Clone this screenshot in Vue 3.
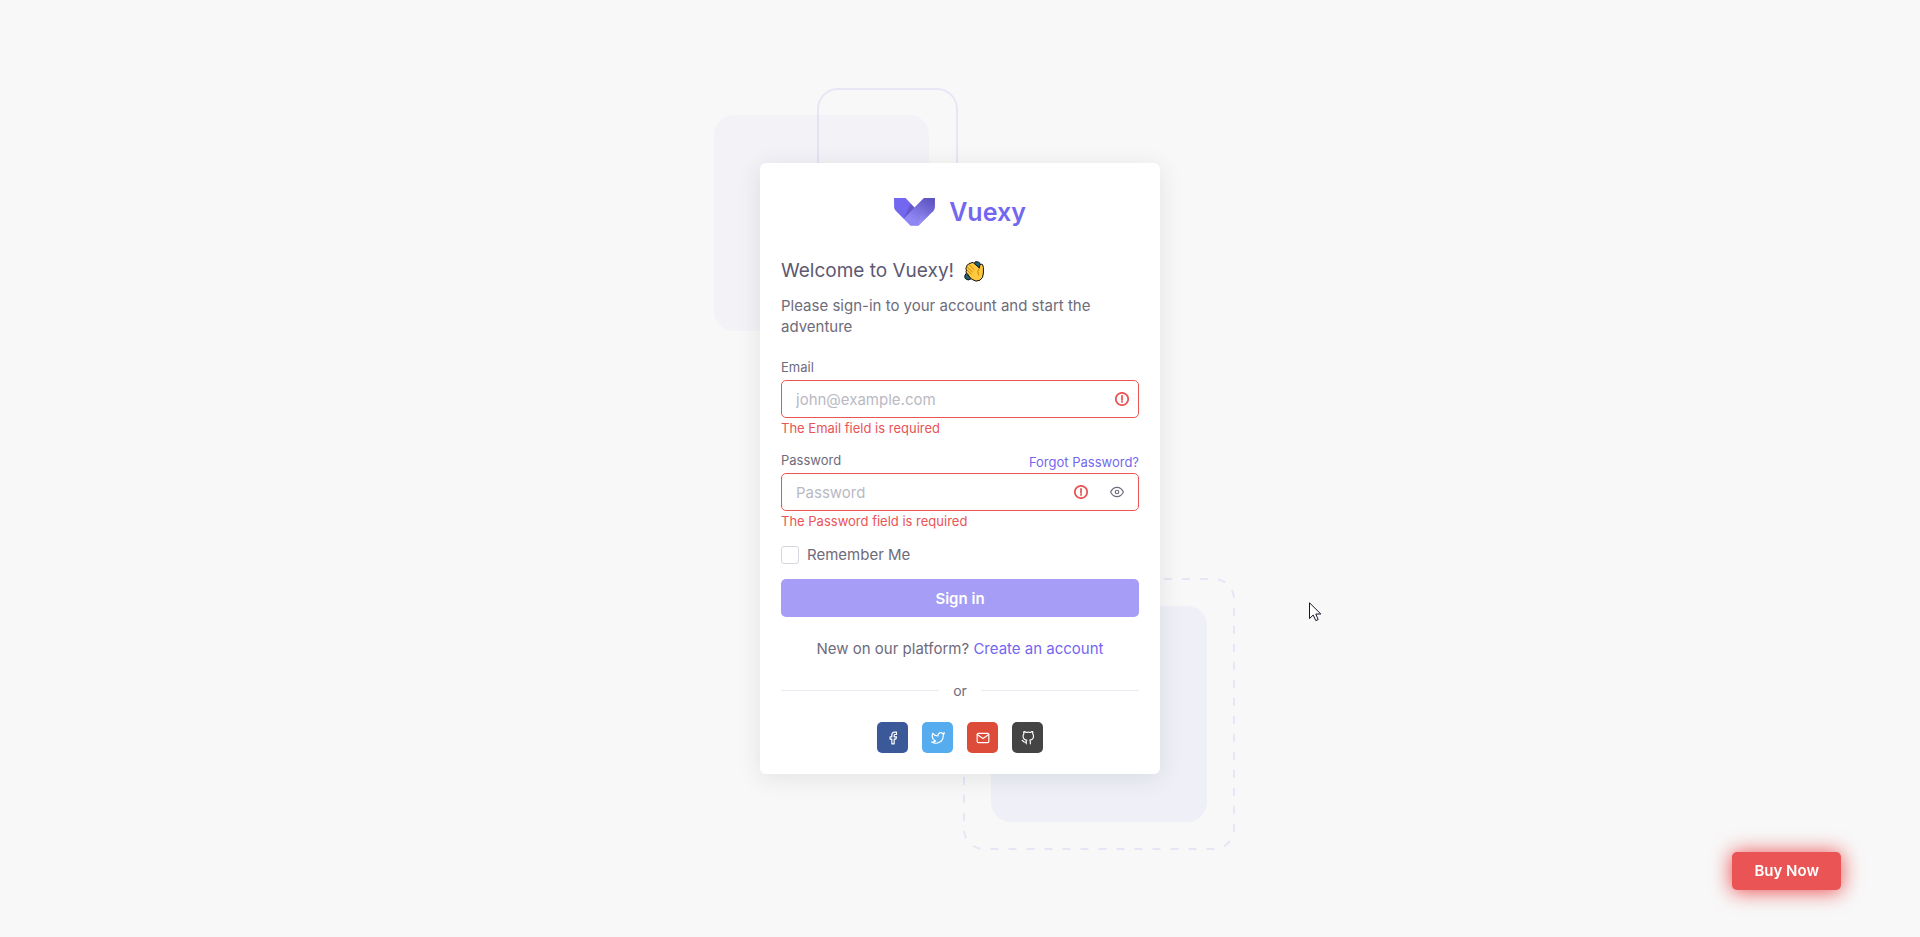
<script setup>
import { ref } from 'vue'

const email = ref('')
const password = ref('')
const remember = ref(false)
const visible = ref(false)

const socials = [
  {
    name: 'Facebook',
    tone: 'facebook',
    paths: ['M18 2h-3a5 5 0 0 0-5 5v3H7v4h3v8h4v-8h3l1-4h-4V7a1 1 0 0 1 1-1h3z'],
  },
  {
    name: 'Twitter',
    tone: 'twitter',
    paths: ['M23 3a10.9 10.9 0 0 1-3.14 1.53 4.48 4.48 0 0 0-7.86 3v1A10.66 10.66 0 0 1 3 4s-4 9 5 13a11.64 11.64 0 0 1-7 2c9 5 20 0 20-11.5a4.5 4.5 0 0 0-.08-.83A7.72 7.72 0 0 0 23 3z'],
  },
  {
    name: 'Google mail',
    tone: 'google',
    paths: ['M4 4h16c1.1 0 2 .9 2 2v12c0 1.1-.9 2-2 2H4c-1.1 0-2-.9-2-2V6c0-1.1.9-2 2-2z', 'M22 6l-10 7L2 6'],
  },
  {
    name: 'GitHub',
    tone: 'github',
    paths: ['M9 19c-5 1.5-5-2.5-7-3m14 6v-3.87a3.37 3.37 0 0 0-.94-2.61c3.14-.35 6.44-1.54 6.44-7A5.44 5.44 0 0 0 20 4.77 5.07 5.07 0 0 0 19.91 1S18.73.65 16 2.48a13.38 13.38 0 0 0-7 0C6.27.65 5.09 1 5.09 1A5.07 5.07 0 0 0 5 4.77a5.44 5.44 0 0 0-1.5 3.78c0 5.42 3.3 6.61 6.44 7A3.37 3.37 0 0 0 9 18.13V22'],
  },
]
</script>

<template>
  <main class="page">
    <div class="auth">
      <svg class="shape shape-top" width="244" height="243" viewBox="0 0 244 243" aria-hidden="true">
        <rect x="0" y="27" width="215" height="216" rx="20" fill="#7367f0" fill-opacity="0.04" />
        <rect x="104" y="1" width="139" height="139" rx="20" fill="none" stroke="#7367f0" stroke-opacity="0.12" stroke-width="2" />
      </svg>
      <svg class="shape shape-bottom" width="272" height="272" viewBox="0 0 272 272" aria-hidden="true">
        <rect x="28" y="28" width="216" height="216" rx="20" fill="#6c72f5" fill-opacity="0.06" />
        <rect x="1" y="1" width="270" height="270" rx="20" fill="none" stroke="#7367f0" stroke-opacity="0.12" stroke-width="2" stroke-dasharray="8 10" />
      </svg>

      <section class="card">
        <a class="brand" href="#">
          <svg width="41" height="28" viewBox="0 0 139 95" aria-hidden="true">
            <defs>
              <linearGradient id="shade" x1="100%" y1="10.5%" x2="50%" y2="89.5%">
                <stop offset="0" stop-color="#000" />
                <stop offset="1" stop-color="#fff" />
              </linearGradient>
              <linearGradient id="sheen" x1="64%" y1="46%" x2="37%" y2="100%">
                <stop offset="0" stop-color="#eee" stop-opacity="0" />
                <stop offset="1" stop-color="#fff" />
              </linearGradient>
            </defs>
            <path fill="#7367f0" d="M0 0H39.18L69.35 32.25L101.43 0H138.78V29.8C137.96 37.35 135.78 42.56 132.26 45.42C128.74 48.28 112.34 64.52 83.07 94.15H56.28L6.72 44.42C2.47 39.98.35 35.11.35 29.8C.35 24.49.23 14.56 0 0Z" />
            <path fill="url(#shade)" opacity=".2" d="M69.35 32.25L101.43 0H138.78V29.8C137.96 37.35 135.78 42.56 132.26 45.42C128.74 48.28 112.34 64.52 83.07 94.15H56.28L32.84 70.5Z" />
            <path fill="#000" opacity=".05" d="M69.39 32.42L32.84 70.5L54.05 16.19Z" />
            <path fill="#000" opacity=".1" d="M69.39 32.42L32.84 70.5L58.37 20.74Z" />
            <path fill="url(#sheen)" opacity=".1" d="M101.43 0L83.07 94.15L130.38 47.07Z" />
          </svg>
          <span class="brand-name">Vuexy</span>
        </a>

        <h1 class="title">
          Welcome to Vuexy!
          <svg class="wave" width="21" height="21" viewBox="0 0 21 21" aria-hidden="true">
            <path d="M10 2.6Q11-.2 13.4.8Q17 1.4 16.4 5.6L14.6 7Z" fill="#1d6478" stroke="#111" stroke-width="1" />
            <path d="M2.2 12.4Q-.2 14.6 1.2 17.4Q4.2 20.4 7 17.8Z" fill="#1d6478" stroke="#111" stroke-width="1" />
            <path d="M2.2 6.6Q1.2 8 2.6 9L2 10.6Q2 12 3.4 12.6Q5 16 8 18.4Q12 21.4 16 19.2Q19.4 17 19.4 12V6.4Q19 2.6 17 3Q15.4 3.6 15.4 7L9.4 1.8Q7.8.8 7 2.2Q5.4 1.6 4.8 3.2Q2.4 3.6 2.2 6.6Z" fill="#ffc83d" stroke="#111" stroke-width="1" stroke-linejoin="round" />
            <path d="M4.8 3.4L10 8.4M3 6L8.4 10.8M3 9L7.4 13M15.4 7Q12.4 10.4 14.4 14" fill="none" stroke="#b97900" stroke-width=".8" stroke-linecap="round" />
          </svg>
        </h1>
        <p class="intro">Please sign-in to your account and start the adventure</p>

        <form novalidate @submit.prevent>
          <div class="group">
            <div class="label-row">
              <label for="email">Email</label>
            </div>
            <div class="field">
              <input id="email" v-model="email" type="email" placeholder="john@example.com" aria-describedby="email-error" />
              <svg class="icon alert" viewBox="0 0 24 24" aria-hidden="true">
                <circle cx="12" cy="12" r="10.6" /><path d="M12 6.5v7M12 16.6v.6" />
              </svg>
            </div>
            <small id="email-error" class="error">The Email field is required</small>
          </div>

          <div class="group">
            <div class="label-row">
              <label for="password">Password</label>
              <a class="forgot" href="#">Forgot Password?</a>
            </div>
            <div class="field">
              <input id="password" v-model="password" :type="visible ? 'text' : 'password'" placeholder="Password" aria-describedby="password-error" />
              <svg class="icon alert" viewBox="0 0 24 24" aria-hidden="true">
                <circle cx="12" cy="12" r="10.6" /><path d="M12 6.5v7M12 16.6v.6" />
              </svg>
              <button class="reveal" type="button" aria-label="Show password" @click="visible = !visible">
                <svg class="icon" viewBox="0 0 24 24" aria-hidden="true">
                  <path d="M1 12s4-8 11-8 11 8 11 8-4 8-11 8-11-8-11-8z" /><circle cx="12" cy="12" r="3" />
                </svg>
              </button>
            </div>
            <small id="password-error" class="error">The Password field is required</small>
          </div>

          <label class="remember" for="remember">
            <input id="remember" v-model="remember" type="checkbox" />
            <span>Remember Me</span>
          </label>

          <button class="submit" type="submit">Sign in</button>
        </form>

        <p class="signup">New on our platform? <a href="#">Create an account</a></p>

        <div class="divider"><span>or</span></div>

        <nav class="socials">
          <a v-for="s in socials" :key="s.name" :class="['social', s.tone]" href="#" :aria-label="s.name">
            <svg class="icon" viewBox="0 0 24 24" aria-hidden="true">
              <path v-for="d in s.paths" :key="d" :d="d" />
            </svg>
          </a>
        </nav>
      </section>
    </div>

    <a class="buy" href="#">Buy Now</a>

    <svg class="pointer" width="13" height="20" viewBox="0 0 13 20" aria-hidden="true">
      <path d="M.5.8V16.6L4.2 13L6.8 18.6L9.2 17.6L6.8 12H11.8Z" fill="#fff" stroke="#15152a" stroke-width="1" />
    </svg>
  </main>
</template>

<style>
body {
  margin: 0;
  background: #f8f8f8;
}
</style>

<style scoped>
.page {
  box-sizing: border-box;
  min-height: 100vh;
  display: flex;
  align-items: center;
  justify-content: center;
  font-family: Inter, "Open Sans", sans-serif;
  font-size: 15px;
  font-weight: 400;
  line-height: 21px;
  color: #6e6b7b;
}

a {
  color: #7367f0;
  text-decoration: none;
}

input,
button {
  font: inherit;
  margin: 0;
}

.auth {
  position: relative;
  width: 100%;
  max-width: 400px;
}

.shape {
  position: absolute;
}

.shape-top {
  top: -75px;
  left: -46px;
}

.shape-bottom {
  right: -75px;
  bottom: -76px;
}

.card {
  position: relative;
  box-sizing: border-box;
  padding: 21px;
  border-radius: 6px;
  background: #fff;
  box-shadow: 0 4px 24px rgba(34, 41, 47, 0.1);
}

.brand {
  display: flex;
  justify-content: center;
  gap: 14px;
  margin: 14px 0 34px;
}

.brand-name {
  font-size: 25px;
  font-weight: 600;
  line-height: 28px;
}

.title {
  display: flex;
  align-items: center;
  gap: 10px;
  margin: 0 0 13px;
  font-size: 19px;
  font-weight: 400;
  line-height: 22px;
  color: #5e5873;
}

.intro {
  margin: 0 0 21px;
}

.group {
  margin-bottom: 13px;
}

.label-row {
  display: flex;
  justify-content: space-between;
  height: 22px;
  font-size: 13px;
  line-height: 18px;
}

.forgot {
  line-height: 22px;
}

.field {
  box-sizing: border-box;
  display: flex;
  align-items: center;
  height: 38px;
  padding-right: 9px;
  border: 1px solid #ea5455;
  border-radius: 5px;
}

.field input {
  flex: 1;
  min-width: 0;
  padding: 0 14px;
  border: 0;
  outline: 0;
  background: transparent;
  color: #6e6b7b;
}

.field input::placeholder {
  color: #b9b9c3;
  opacity: 1;
}

.icon {
  flex: none;
  width: 14px;
  height: 14px;
  fill: none;
  stroke: currentColor;
  stroke-width: 2;
  stroke-linecap: round;
  stroke-linejoin: round;
}

.alert {
  color: #ea5455;
  stroke-width: 3;
}

.reveal {
  display: flex;
  margin-left: 18px;
  padding: 4px 5px 4px 4px;
  border: 0;
  background: none;
  color: #6e6b7b;
}

.error {
  display: block;
  font-size: 13px;
  line-height: 20px;
  color: #ea5455;
}

.remember {
  display: flex;
  align-items: center;
  gap: 8px;
  margin-bottom: 14px;
}

.remember input {
  appearance: none;
  width: 18px;
  height: 18px;
  border: 1px solid #d8d6de;
  border-radius: 3px;
  background: #fff;
}

.remember input:checked {
  background: #7367f0;
}

.submit {
  display: block;
  width: 100%;
  height: 38px;
  border: 0;
  border-radius: 5px;
  background: #a59df6;
  color: #fff;
  font-weight: 600;
}

.signup {
  margin: 21px 0;
  text-align: center;
}

.divider {
  display: flex;
  align-items: center;
  gap: 14px;
  margin-bottom: 21px;
  font-size: 14px;
}

.divider::before,
.divider::after {
  content: "";
  flex: 1;
  height: 1px;
  background: #ebe9f1;
}

.socials {
  display: flex;
  justify-content: center;
  gap: 14px;
}

.social {
  display: flex;
  align-items: center;
  justify-content: center;
  width: 31px;
  height: 31px;
  border-radius: 5px;
  color: #fff;
}

.facebook {
  background: #3b5998;
}

.twitter {
  background: #55acee;
}

.google {
  background: #dd4b39;
}

.github {
  background: #444;
}

.buy {
  position: fixed;
  right: 79px;
  bottom: 47px;
  padding: 0 22px;
  border-radius: 5px;
  background: #ea5455;
  box-shadow: 0 1px 20px 1px #ea5455;
  color: #fff;
  font-weight: 600;
  line-height: 38px;
}

.pointer {
  position: absolute;
  top: 602px;
  left: 1309px;
}
</style>
